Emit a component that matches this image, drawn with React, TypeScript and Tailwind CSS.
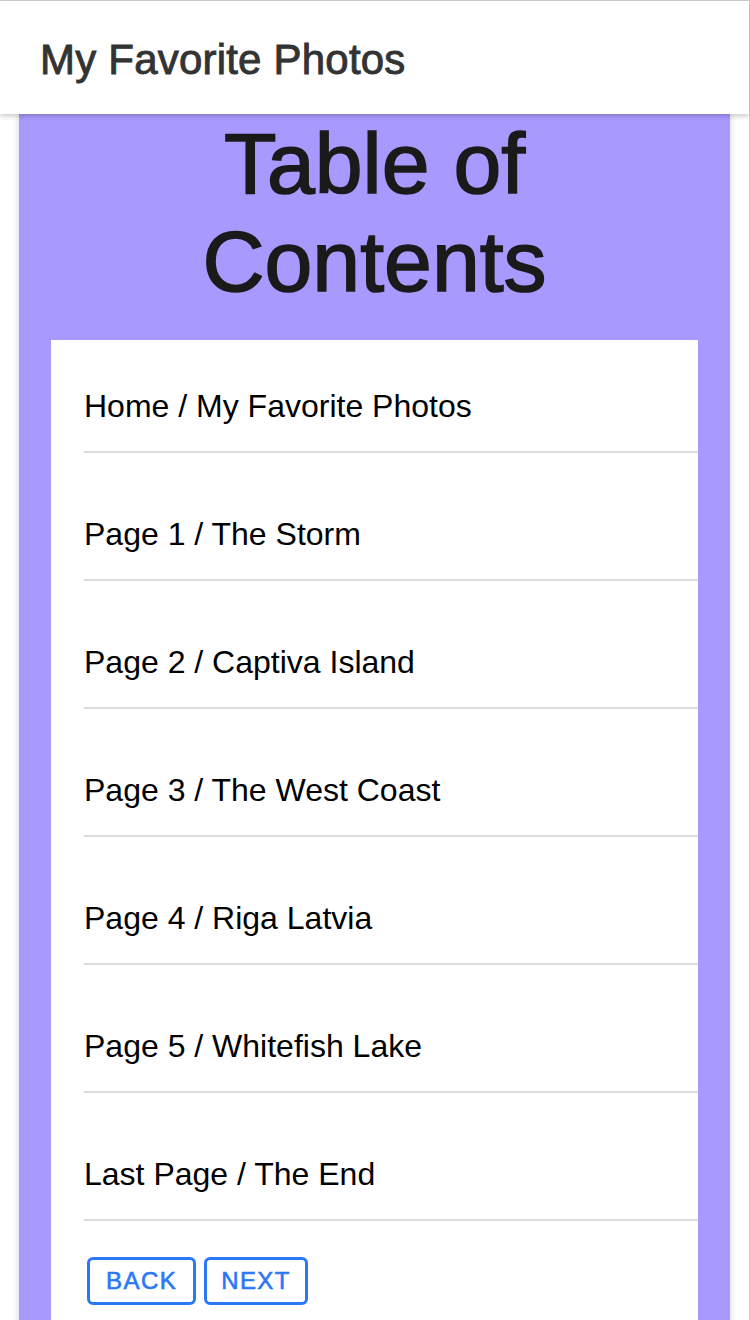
const PAGES = [
  'Home / My Favorite Photos',
  'Page 1 / The Storm',
  'Page 2 / Captiva Island',
  'Page 3 / The West Coast',
  'Page 4 / Riga Latvia',
  'Page 5 / Whitefish Lake',
  'Last Page / The End',
];

export default function App() {
  return (
    <div className="min-h-[1320px] border-t border-r border-[#d0d0d0] bg-white font-['Liberation_Sans',Arial,sans-serif]">
      <header className="relative z-10 flex h-[113px] items-center bg-white pl-10 pt-1 shadow-[0_2px_5px_rgba(0,0,0,0.22)]">
        <h1 className="text-[42px] leading-none tracking-[0.005em] text-[#333] [-webkit-text-stroke:0.9px_#333]">
          My Favorite Photos
        </h1>
      </header>

      <main className="mx-[19px] bg-[#a899fe] px-8 shadow-[0_0_7px_rgba(0,0,0,0.18)]">
        <h2 className="text-center text-[86px] leading-[98px] text-[#1a1a1a] [-webkit-text-stroke:1.6px_#1a1a1a]">
          Table of
          <br />
          Contents
        </h2>

        <div className="mt-[30px] bg-white pb-10">
          <ul>
            {PAGES.map((p, i) => (
              <li
                key={p}
                className={`ml-[33px] border-b-2 border-[#dcdcdc] pb-[26px] text-[32px] leading-[37px] text-black ${
                  i === 0 ? 'pt-[48px]' : 'pt-[63px]'
                }`}
              >
                {p}
              </li>
            ))}
          </ul>

          <div className="mt-9 ml-9 flex gap-2">
            <button className="h-12 rounded-md border-[3px] border-[#2a78f6] px-4 text-[24px] tracking-[0.06em] text-[#2a78f6] [-webkit-text-stroke:0.6px_#2a78f6]">
              BACK
            </button>
            <button className="h-12 rounded-md border-[3px] border-[#2a78f6] px-[14px] text-[24px] tracking-[0.06em] text-[#2a78f6] [-webkit-text-stroke:0.6px_#2a78f6]">
              NEXT
            </button>
          </div>
        </div>
      </main>
    </div>
  );
}
